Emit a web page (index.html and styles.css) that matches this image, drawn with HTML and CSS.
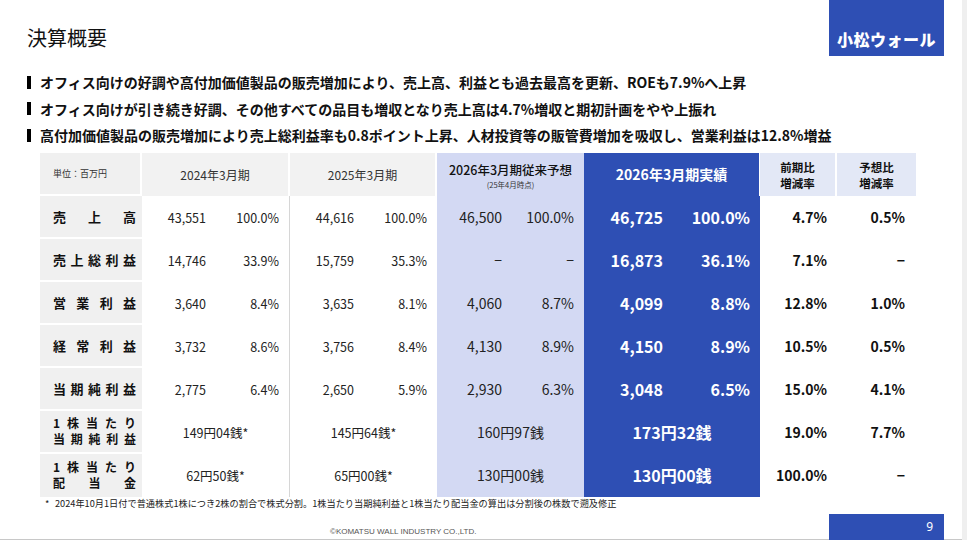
FILE: index.html
```html
<!DOCTYPE html>
<html lang="ja">
<head>
<meta charset="utf-8">
<title>決算概要</title>
<link rel="stylesheet" href="styles.css">
</head>
<body>
<div class="screen">
  <div class="slide">
    <header class="top">
      <h1 class="title">決算概要</h1>
      <div class="logo"><span>小松ウォール</span></div>
    </header>

    <ul class="points">
      <li>オフィス向けの好調や高付加価値製品の販売増加により、売上高、利益とも過去最高を更新、ROEも7.9%へ上昇</li>
      <li>オフィス向けが引き続き好調、その他すべての品目も増収となり売上高は4.7%増収と期初計画をやや上振れ</li>
      <li>高付加価値製品の販売増加により売上総利益率も0.8ポイント上昇、人材投資等の販管費増加を吸収し、営業利益は12.8%増益</li>
    </ul>

    <div class="tbl">
      <!-- header -->
      <div class="h h-unit">単位：百万円</div>
      <div class="h h-grey">2024年3月期</div>
      <div class="h h-grey">2025年3月期</div>
      <div class="h h-fc"><span class="fc-main">2026年3月期従来予想</span><span class="fc-sub">(25年4月時点)</span></div>
      <div class="h h-act">2026年3月期実績</div>
      <div class="h h-rate"><span>前期比</span><span>増減率</span></div>
      <div class="h h-rate h-last"><span>予想比</span><span>増減率</span></div>

      <!-- row 1 -->
      <div class="lab"><div class="ll"><i>売</i><i>上</i><i>高</i></div></div>
      <div class="c c-24"><span>43,551</span><span>100.0%</span></div>
      <div class="c c-25"><span>44,616</span><span>100.0%</span></div>
      <div class="c c-fc"><span>46,500</span><span>100.0%</span></div>
      <div class="c c-act"><span>46,725</span><span>100.0%</span></div>
      <div class="r r1">4.7%</div>
      <div class="r r2">0.5%</div>

      <!-- row 2 -->
      <div class="lab"><div class="ll"><i>売</i><i>上</i><i>総</i><i>利</i><i>益</i></div></div>
      <div class="c c-24"><span>14,746</span><span>33.9%</span></div>
      <div class="c c-25"><span>15,759</span><span>35.3%</span></div>
      <div class="c c-fc"><span>−</span><span>−</span></div>
      <div class="c c-act"><span>16,873</span><span>36.1%</span></div>
      <div class="r r1">7.1%</div>
      <div class="r r2">−</div>

      <!-- row 3 -->
      <div class="lab"><div class="ll"><i>営</i><i>業</i><i>利</i><i>益</i></div></div>
      <div class="c c-24"><span>3,640</span><span>8.4%</span></div>
      <div class="c c-25"><span>3,635</span><span>8.1%</span></div>
      <div class="c c-fc"><span>4,060</span><span>8.7%</span></div>
      <div class="c c-act"><span>4,099</span><span>8.8%</span></div>
      <div class="r r1">12.8%</div>
      <div class="r r2">1.0%</div>

      <!-- row 4 -->
      <div class="lab"><div class="ll"><i>経</i><i>常</i><i>利</i><i>益</i></div></div>
      <div class="c c-24"><span>3,732</span><span>8.6%</span></div>
      <div class="c c-25"><span>3,756</span><span>8.4%</span></div>
      <div class="c c-fc"><span>4,130</span><span>8.9%</span></div>
      <div class="c c-act"><span>4,150</span><span>8.9%</span></div>
      <div class="r r1">10.5%</div>
      <div class="r r2">0.5%</div>

      <!-- row 5 -->
      <div class="lab"><div class="ll"><i>当</i><i>期</i><i>純</i><i>利</i><i>益</i></div></div>
      <div class="c c-24"><span>2,775</span><span>6.4%</span></div>
      <div class="c c-25"><span>2,650</span><span>5.9%</span></div>
      <div class="c c-fc"><span>2,930</span><span>6.3%</span></div>
      <div class="c c-act"><span>3,048</span><span>6.5%</span></div>
      <div class="r r1">15.0%</div>
      <div class="r r2">4.1%</div>

      <!-- row 6 -->
      <div class="lab lab2">
        <div class="ll"><i>1</i><i>株</i><i>当</i><i>た</i><i>り</i></div>
        <div class="ll"><i>当</i><i>期</i><i>純</i><i>利</i><i>益</i></div>
      </div>
      <div class="m m-24">149円04銭*</div>
      <div class="m m-25">145円64銭*</div>
      <div class="m m-fc">160円97銭</div>
      <div class="m m-act">173円32銭</div>
      <div class="r r1">19.0%</div>
      <div class="r r2">7.7%</div>

      <!-- row 7 -->
      <div class="lab lab2 lab-end">
        <div class="ll"><i>1</i><i>株</i><i>当</i><i>た</i><i>り</i></div>
        <div class="ll"><i>配</i><i>当</i><i>金</i></div>
      </div>
      <div class="m m-24">62円50銭*</div>
      <div class="m m-25">65円00銭*</div>
      <div class="m m-fc">130円00銭</div>
      <div class="m m-act">130円00銭</div>
      <div class="r r1">100.0%</div>
      <div class="r r2">−</div>
    </div>

    <p class="note"><span class="ast">*</span>2024年10月1日付で普通株式1株につき2株の割合で株式分割。1株当たり当期純利益と1株当たり配当金の算出は分割後の株数で遡及修正</p>

    <footer class="foot">
      <span class="copy">©KOMATSU WALL INDUSTRY CO.,LTD.</span>
      <span class="page">9</span>
    </footer>
  </div>
  <div class="strip"></div>
</div>
</body>
</html>
```
FILE: styles.css
```css
* { box-sizing: border-box; }

html, body {
  margin: 0;
  padding: 0;
  background: #ffffff;
}

body {
  font-family: "Noto Sans CJK JP", "Noto Sans", sans-serif;
  color: #111111;
}

.screen {
  display: flex;
  width: 967px;
  height: 540px;
  overflow: hidden;
}

.slide {
  width: 962px;
  height: 540px;
  display: flex;
  flex-direction: column;
  border-bottom: 1px solid #c8c8c8;
}

.strip {
  width: 5px;
  height: 540px;
  background: #efefef;
}

/* header */
.top {
  display: flex;
  height: 56px;
  align-items: flex-start;
}

.title {
  margin: 28px 0 0 27px;
  font-size: 20px;
  line-height: 20px;
  font-weight: 400;
  color: #111;
}

.logo {
  margin-left: auto;
  margin-right: 18px;
  width: 115px;
  height: 56px;
  background: #2e4fb4;
  display: flex;
  align-items: flex-end;
  justify-content: center;
  padding-bottom: 9px;
}

.logo span {
  color: #ffffff;
  font-size: 16px;
  line-height: 16px;
  font-weight: 900;
  letter-spacing: 0.5px;
}

/* bullets */
.points {
  list-style: none;
  margin: 13px 0 0 0;
  padding: 0 0 0 27px;
}

.points li {
  display: flex;
  align-items: center;
  height: 26.5px;
  font-size: 14px;
  font-weight: 700;
  color: #111;
  white-space: nowrap;
}

.points li::before {
  content: "";
  display: block;
  width: 4px;
  height: 13px;
  background: #000;
  margin-right: 9px;
  flex: none;
}

/* table */
.tbl {
  margin: 4px 0 0 40px;
  display: grid;
  grid-template-columns: 102px 148px 147px 147px 176px 77px 79px;
  grid-template-rows: repeat(8, 43px);
  width: 876px;
}

.h {
  display: flex;
  align-items: center;
  justify-content: center;
  font-size: 12px;
}

.h-unit {
  background: #f0f0f0;
  justify-content: flex-start;
  padding-left: 13px;
  font-size: 9px;
  color: #333;
  border-right: 2px solid #fff;
  border-bottom: 2px solid #fff;
}

.h-grey {
  background: #f2f2f2;
  color: #333;
  border-right: 2px solid #fff;
}

.h-fc {
  background: #d3d9f3;
  flex-direction: column;
  justify-content: flex-start;
  padding-top: 9px;
}

.fc-main {
  font-size: 12.5px;
  line-height: 16px;
  font-weight: 500;
  color: #111;
}

.fc-sub {
  font-size: 7.5px;
  line-height: 11px;
  margin-top: 1px;
  color: #333;
}

.h-act {
  background: #2e4fb4;
  color: #fff;
  font-size: 14px;
  font-weight: 700;
  border-right: 1px solid #fff;
}

.h-rate {
  background: #e3e8f6;
  flex-direction: column;
  font-size: 11.5px;
  line-height: 16px;
  font-weight: 700;
  color: #111;
  border-right: 2px solid #fff;
  padding-top: 1px;
}

.h-last {
  border-right: none;
}

/* row labels */
.lab {
  background: #f0f0f0;
  border-bottom: 2px solid #fff;
  padding: 0 6px 0 13px;
  display: flex;
  flex-direction: column;
  justify-content: center;
  font-size: 13px;
  font-weight: 700;
  line-height: 15px;
  color: #111;
}

.lab2 {
  font-size: 12px;
  line-height: 16px;
}

.lab-end {
  border-bottom: none;
}

.ll {
  display: flex;
  justify-content: space-between;
}

.ll i {
  font-style: normal;
}

/* value cells: number + percent */
.c {
  display: grid;
  grid-template-columns: 64px 73px;
  align-items: center;
  text-align: right;
  font-size: 12.5px;
  color: #222;
}

.c-24 {
  border-right: 1px solid #d6d6d6;
}

.c-fc {
  background: #d3d9f3;
  grid-template-columns: 65px 72px;
  font-size: 14px;
  color: #222;
}

.c-act {
  background: #2e4fb4;
  grid-template-columns: 79px 87px;
  font-size: 16px;
  font-weight: 700;
  color: #fff;
}

/* merged yen cells */
.m {
  display: flex;
  align-items: center;
  justify-content: center;
  font-size: 12.5px;
  color: #222;
}

.m-24 {
  border-right: 1px solid #d6d6d6;
}

.m-fc {
  background: #d3d9f3;
  font-size: 14px;
}

.m-act {
  background: #2e4fb4;
  color: #fff;
  font-size: 16px;
  font-weight: 700;
}

/* rate columns */
.r {
  display: flex;
  align-items: center;
  justify-content: flex-end;
  font-size: 14px;
  font-weight: 700;
  color: #111;
}

.r1 { padding-right: 10px; }
.r2 { padding-right: 11px; }

/* footnote */
.note {
  margin: 0 0 0 45px;
  height: 12px;
  font-size: 9.2px;
  line-height: 12px;
  color: #222;
  white-space: nowrap;
}

.ast {
  display: inline-block;
  width: 10px;
}

/* footer */
.foot {
  margin-top: 5px;
  height: 26px;
  display: flex;
  align-items: flex-end;
}

.copy {
  margin-left: 330px;
  padding-bottom: 3px;
  font-family: "Liberation Sans Narrow", "Liberation Sans", sans-serif;
  font-size: 8px;
  line-height: 10px;
  color: #555;
}

.page {
  margin-left: auto;
  margin-right: 18px;
  width: 115px;
  height: 26px;
  background: #2e4fb4;
  color: #fff;
  font-family: "Noto Sans", sans-serif;
  font-size: 12px;
  display: flex;
  align-items: center;
  justify-content: flex-end;
  padding-right: 11px;
}
```
